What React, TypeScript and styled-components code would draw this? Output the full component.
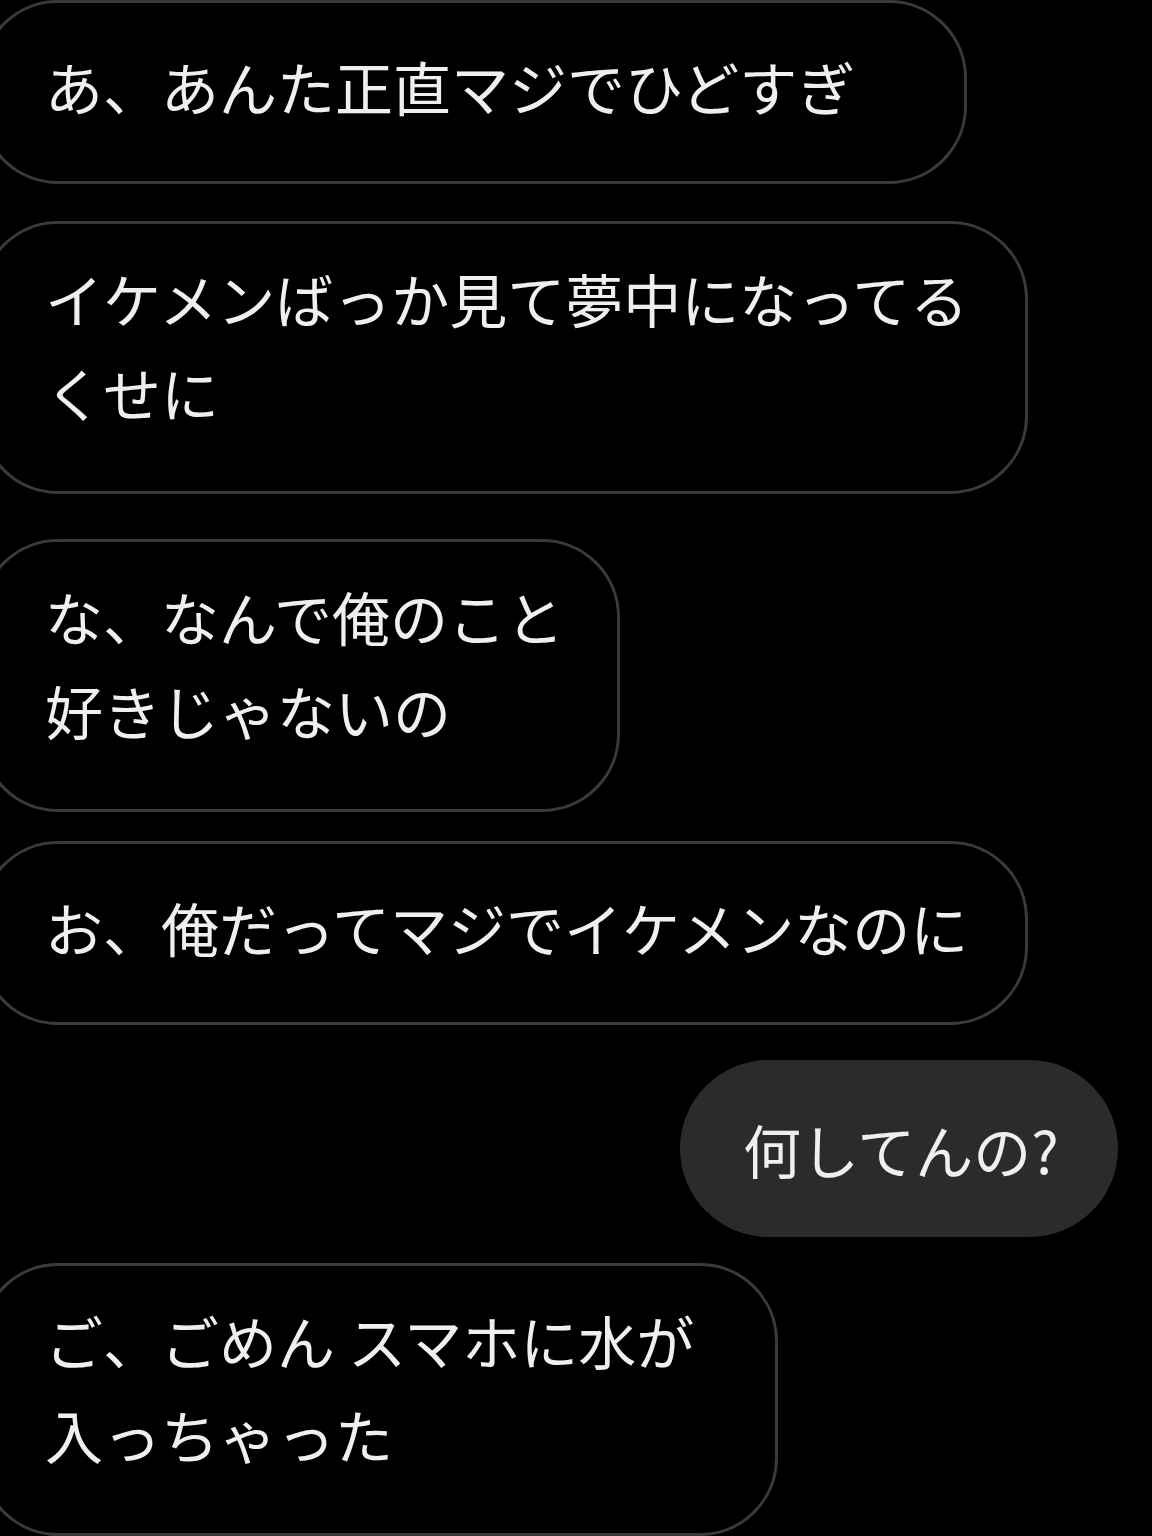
import { createGlobalStyle, styled } from "styled-components";

const GlobalStyle = createGlobalStyle`
  html, body {
    margin: 0;
    padding: 0;
    background: #000;
  }
  body {
    font-family: "Noto Sans CJK JP", "Noto Sans", sans-serif;
    color: #efefef;
    overflow: hidden;
  }
`;

const Screen = styled.div`
  width: 1152px;
  height: 1536px;
  overflow: hidden;
  background: #000;
`;

const Thread = styled.div`
  display: flex;
  flex-direction: column;
`;

const Row = styled.div<{ $mine?: boolean; $gap: number }>`
  display: flex;
  justify-content: ${({ $mine }) => ($mine ? "flex-end" : "flex-start")};
  margin-top: ${({ $gap }) => $gap}px;
`;

// incoming message: outlined, runs off the left edge of the screen
const Bubble = styled.div<{ $width: number; $multi?: boolean }>`
  box-sizing: border-box;
  width: ${({ $width }) => $width}px;
  margin-left: -20px;
  padding: ${({ $multi }) => ($multi ? "27px 0 52px 62px" : "36px 0 48px 62px")};
  border: 3px solid #3a3a3a;
  border-radius: 78px;
  font-size: 58px;
  line-height: 94px;
  white-space: nowrap;
`;

// own message: filled grey pill on the right
const MyBubble = styled.div`
  box-sizing: border-box;
  width: 438px;
  height: 177px;
  margin-right: 34px;
  padding-left: 63px;
  display: flex;
  align-items: center;
  background: #2b2b2b;
  border-radius: 89px;
  font-size: 58px;
  line-height: 94px;
  white-space: nowrap;
`;

const messages = [
  { gap: 0, width: 987, lines: ["あ、あんた正直マジでひどすぎ"] },
  { gap: 37, width: 1048, lines: ["イケメンばっか見て夢中になってる", "くせに"] },
  { gap: 45, width: 640, lines: ["な、なんで俺のこと", "好きじゃないの"] },
  { gap: 29, width: 1048, lines: ["お、俺だってマジでイケメンなのに"] },
];

const App = () => {
  return (
    <Screen>
      <GlobalStyle />
      <Thread>
        {messages.map((m, i) => (
          <Row key={i} $gap={m.gap}>
            <Bubble $width={m.width} $multi={m.lines.length > 1}>
              {m.lines.map((line, j) => (
                <div key={j}>{line}</div>
              ))}
            </Bubble>
          </Row>
        ))}
        <Row $mine $gap={35}>
          <MyBubble>何してんの?</MyBubble>
        </Row>
        <Row $gap={26}>
          <Bubble $width={798} $multi>
            <div>ご、ごめん スマホに水が</div>
            <div>入っちゃった</div>
          </Bubble>
        </Row>
      </Thread>
    </Screen>
  );
};

export default App;
